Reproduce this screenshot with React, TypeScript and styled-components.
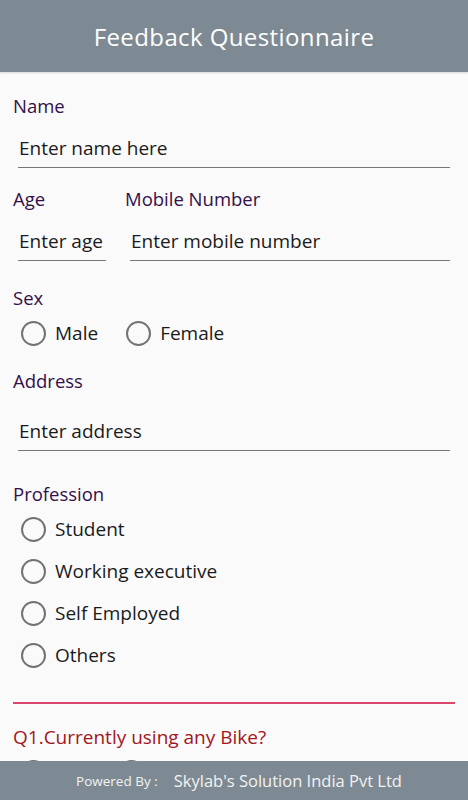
import React from "react";
import styled, { createGlobalStyle } from "styled-components";

const Global = createGlobalStyle`
  html, body { margin: 0; padding: 0; }
  body {
    background: #fafafa;
    font-family: "Open Sans", "Noto Sans", sans-serif;
    -webkit-font-smoothing: antialiased;
  }
  * { box-sizing: border-box; }
`;

const Page = styled.div`
  width: 468px;
  height: 800px;
  display: flex;
  flex-direction: column;
  background: #fafafa;
  overflow: hidden;
`;

const Header = styled.header`
  height: 72px;
  flex: none;
  background: #7e8a93;
  display: flex;
  align-items: center;
  justify-content: center;
  color: #ffffff;
  font-size: 24px;
  letter-spacing: 0.4px;
  box-shadow: 0 1px 2px rgba(0, 0, 0, 0.15);
`;

const Content = styled.main`
  flex: 1;
  min-height: 0;
  overflow: hidden;
  padding: 22px 13px 0 13px;
  display: flex;
  flex-direction: column;
`;

const Label = styled.div<{ $mt?: number }>`
  margin-top: ${(p) => p.$mt ?? 0}px;
  font-size: 18.5px;
  line-height: 24px;
  color: #33104a;
  white-space: nowrap;
`;

const Field = styled.div<{ $pt?: number; $w?: number }>`
  margin: 0 5px;
  padding: ${(p) => p.$pt ?? 18}px 0 7px 1px;
  border-bottom: 1px solid #767676;
  font-size: 19px;
  line-height: 24px;
  color: #1a1a1a;
  white-space: nowrap;
  ${(p) => (p.$w ? `width: ${p.$w}px;` : "")}
`;

const Row = styled.div`
  display: flex;
`;

const AgeCol = styled.div`
  width: 112px;
  flex: none;
  display: flex;
  flex-direction: column;
`;

const MobileCol = styled.div`
  flex: 1;
  display: flex;
  flex-direction: column;
`;

const RadioGroup = styled.div<{ $row?: boolean; $gap?: number }>`
  margin-top: 2px;
  display: flex;
  flex-direction: ${(p) => (p.$row ? "row" : "column")};
  column-gap: ${(p) => p.$gap ?? 20}px;
  flex: none;
`;

const RadioItem = styled.label`
  height: 42px;
  display: flex;
  align-items: center;
  padding-left: 8px;
  font-size: 19px;
  color: #1a1a1a;
  white-space: nowrap;
`;

const Circle = styled.span`
  width: 25px;
  height: 25px;
  flex: none;
  border-radius: 50%;
  border: 2.5px solid #737373;
  margin-right: 9px;
`;

const Divider = styled.div`
  margin-top: 26px;
  height: 2px;
  background: #d9466c;
  flex: none;
`;

const Question = styled.div`
  margin-top: 21px;
  font-size: 19px;
  line-height: 24px;
  color: #a3161c;
  flex: none;
`;

const Footer = styled.footer`
  height: 39px;
  flex: none;
  background: #7e8a93;
  display: flex;
  align-items: center;
  justify-content: center;
  gap: 16px;
  padding-left: 10px;
  color: #f2f2f2;
`;

const Small = styled.span`
  font-size: 13.5px;
`;

const Company = styled.span`
  font-size: 16.5px;
`;

const Radio = ({ label }: { label: string }) => (
  <RadioItem>
    <Circle />
    {label}
  </RadioItem>
);

export default function App() {
  return (
    <>
      <Global />
      <Page>
        <Header>Feedback Questionnaire</Header>
        <Content>
          <Label>Name</Label>
          <Field>Enter name here</Field>

          <Row>
            <AgeCol>
              <Label $mt={19}>Age</Label>
              <Field $w={88}>Enter age</Field>
            </AgeCol>
            <MobileCol>
              <Label $mt={19}>Mobile Number</Label>
              <Field>Enter mobile number</Field>
            </MobileCol>
          </Row>

          <Label $mt={25}>Sex</Label>
          <RadioGroup $row>
            <Radio label="Male" />
            <Radio label="Female" />
          </RadioGroup>

          <Label $mt={15}>Address</Label>
          <Field $pt={26}>Enter address</Field>

          <Label $mt={31}>Profession</Label>
          <RadioGroup>
            <Radio label="Student" />
            <Radio label="Working executive" />
            <Radio label="Self Employed" />
            <Radio label="Others" />
          </RadioGroup>

          <Divider />
          <Question>Q1.Currently using any Bike?</Question>
          <RadioGroup $row $gap={26}>
            <Radio label="Yes" />
            <Radio label="No" />
          </RadioGroup>
        </Content>
        <Footer>
          <Small>Powered By :</Small>
          <Company>Skylab's Solution India Pvt Ltd</Company>
        </Footer>
      </Page>
    </>
  );
}
